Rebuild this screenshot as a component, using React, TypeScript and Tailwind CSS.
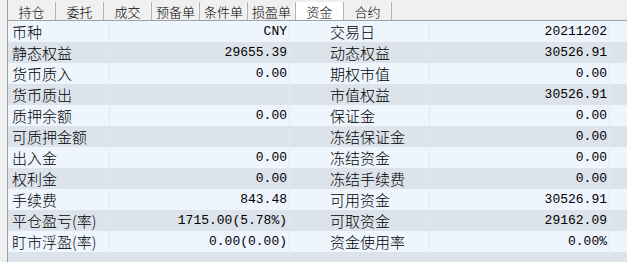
import React from "react";

const tabs = ["持仓", "委托", "成交", "预备单", "条件单", "损盈单", "资金", "合约"];

const rows = [
  ["币种", "CNY", "交易日", "20211202"],
  ["静态权益", "29655.39", "动态权益", "30526.91"],
  ["货币质入", "0.00", "期权市值", "0.00"],
  ["货币质出", "", "市值权益", "30526.91"],
  ["质押余额", "0.00", "保证金", "0.00"],
  ["可质押金额", "", "冻结保证金", "0.00"],
  ["出入金", "0.00", "冻结资金", "0.00"],
  ["权利金", "0.00", "冻结手续费", "0.00"],
  ["手续费", "843.48", "可用资金", "30526.91"],
  ["平仓盈亏(率)", "1715.00(5.78%)", "可取资金", "29162.09"],
  ["盯市浮盈(率)", "0.00(0.00)", "资金使用率", "0.00%"],
  ["", "", "", ""],
];

export default function App() {
  return (
    <div className="w-[627px] h-[262px] overflow-hidden bg-[#f0f0f0] flex font-['Noto_Sans_CJK_SC',sans-serif] text-black">
      <div className="w-[7px] shrink-0" />
      <div className="flex-1 flex flex-col border-l border-[#a0a0a0]">
        {/* tab strip */}
        <div className="h-[21px] flex items-end border-b border-[#a0a0a0] shrink-0">
          {tabs.map((t) => (
            <div
              key={t}
              className={
                "w-[48px] h-[18px] flex items-center justify-center text-[13px] font-light leading-none border-r border-[#b4b4b4] " +
                (t === "资金" ? "bg-white" : "")
              }
            >
              {t}
            </div>
          ))}
        </div>
        {/* account grid */}
        <div className="flex flex-col">
          {rows.map((r, i) => (
            <div
              key={i}
              className={
                "grid grid-cols-[102px_180px_140px_180px_1fr] h-[21px] shrink-0 " +
                (i % 2 === 0 ? "bg-[#eef5fd]" : "bg-[#dde3ea]")
              }
            >
              <div className="pl-[4px] text-[15px] font-light leading-[21px] border-r border-[#e3e9f0] whitespace-nowrap">
                {r[0]}
              </div>
              <div className="pr-[2px] text-right font-['Liberation_Mono',monospace] text-[13px] leading-[21px] border-r border-[#e3e9f0] whitespace-nowrap">
                {r[1]}
              </div>
              <div className="pl-[40px] text-[15px] font-light leading-[21px] border-r border-[#e3e9f0] whitespace-nowrap">
                {r[2]}
              </div>
              <div className="pr-[2px] text-right font-['Liberation_Mono',monospace] text-[13px] leading-[21px] border-r border-[#e3e9f0] whitespace-nowrap">
                {r[3]}
              </div>
              <div />
            </div>
          ))}
        </div>
      </div>
    </div>
  );
}
